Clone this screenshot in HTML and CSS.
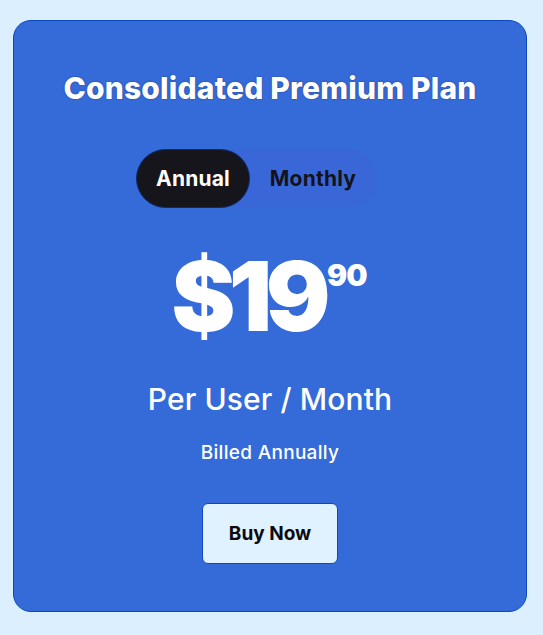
FILE: index.html
```html
<!DOCTYPE html>
<html lang="en">
<head>
<meta charset="utf-8">
<title>Consolidated Premium Plan</title>
<link rel="stylesheet" href="styles.css">
</head>
<body>
  <main class="card">
    <h1 class="title">Consolidated Premium Plan</h1>
    <div class="toggle">
      <button class="toggle-btn active">Annual</button>
      <button class="toggle-btn">Monthly</button>
    </div>
    <div class="price">
      <span class="amount">$19</span><span class="cents">90</span>
    </div>
    <p class="per">Per User / Month</p>
    <p class="billed">Billed Annually</p>
    <button class="buy">Buy Now</button>
  </main>
</body>
</html>
```

FILE: styles.css
```css
* { box-sizing: border-box; }
html, body { margin: 0; }
body {
  background: #dbefff;
  padding: 20px 16px 23px 13px;
  font-family: Inter, "Open Sans", sans-serif;
}
.card {
  width: 514px;
  height: 592px;
  background: #356ad9;
  border: 1px solid #0b48bf;
  border-radius: 18px;
  display: flex;
  flex-direction: column;
  align-items: center;
  padding-top: 49px;
}
.title {
  margin: 0;
  color: #fff;
  font-size: 30px;
  line-height: 37px;
  font-weight: 800;
  letter-spacing: 0.2px;
  text-shadow: 0 0 1.5px rgba(10, 20, 60, 0.6);
}
.toggle {
  margin-top: 42px;
  margin-right: 28px;
  width: 240px;
  height: 59px;
  border-radius: 30px;
  background: #3a67d7;
  display: flex;
  align-items: center;
}
.toggle-btn {
  border: 0;
  background: transparent;
  font-family: inherit;
  font-size: 21px;
  font-weight: 700;
  letter-spacing: 0.2px;
  height: 59px;
  border-radius: 30px;
  color: #14131b;
  padding: 0;
  cursor: pointer;
}
.toggle-btn.active {
  width: 114px;
  background: #16151b;
  color: #fff;
  border: 1px solid #0d2a70;
}
.toggle-btn:not(.active) {
  flex: 1;
}
.price {
  margin-top: 38px;
  margin-right: 2px;
  display: flex;
  align-items: flex-start;
  color: #fff;
  font-weight: 900;
}
.amount {
  font-size: 96px;
  line-height: 100px;
  letter-spacing: -6.5px;
}
.cents {
  font-size: 30px;
  line-height: 30px;
  margin-top: 14px;
  margin-left: 3px;
  letter-spacing: -1px;
}
.per {
  margin: 35px 0 0;
  color: #fff;
  font-size: 30px;
  line-height: 37px;
  font-weight: 500;
  letter-spacing: 0.1px;
}
.billed {
  margin: 24px 0 0;
  color: #fff;
  font-size: 19px;
  line-height: 22px;
  font-weight: 500;
  letter-spacing: 0.3px;
}
.buy {
  margin-top: 39px;
  width: 136px;
  height: 61px;
  background: #e0f1ff;
  border: 1px solid #0b48bf;
  border-radius: 6px;
  font-family: inherit;
  font-size: 19px;
  font-weight: 700;
  color: #0c0c10;
  cursor: pointer;
}
```
